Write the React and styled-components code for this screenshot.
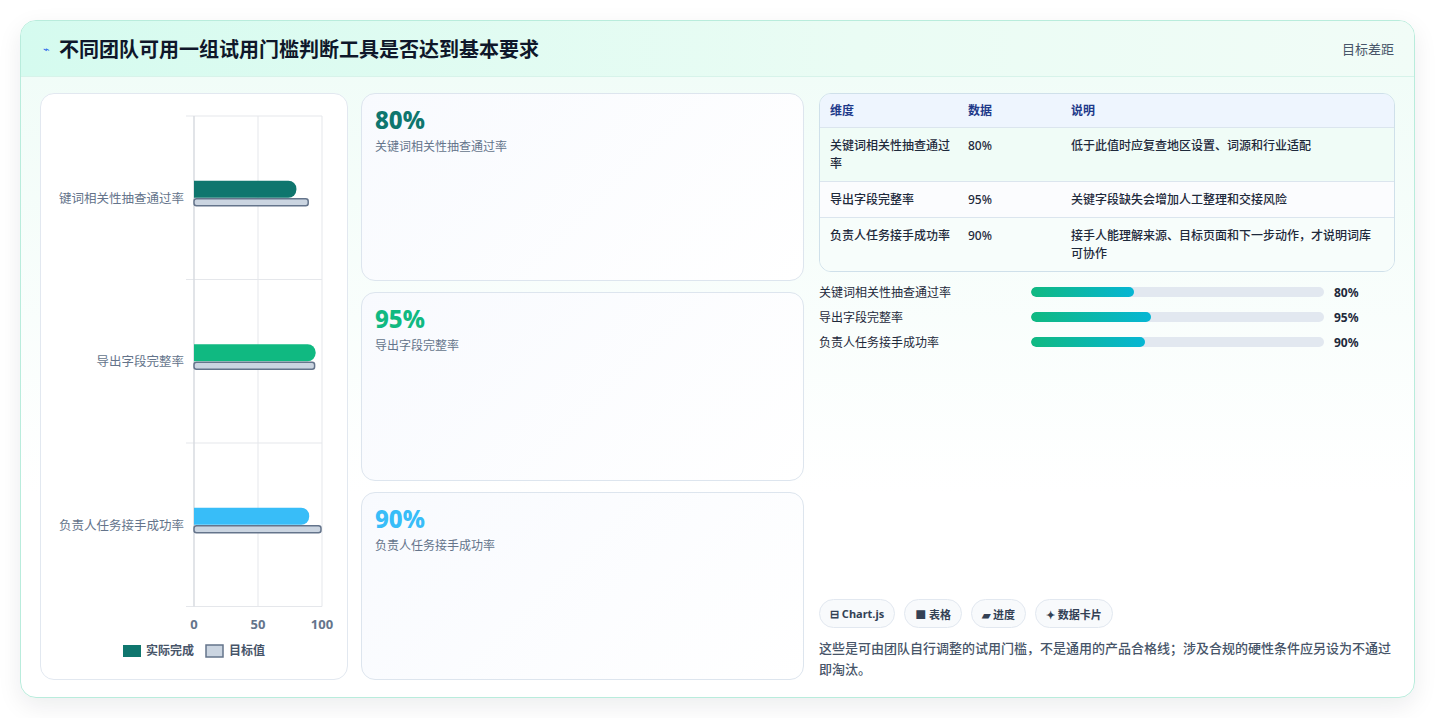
import React from "react";
import styled, { createGlobalStyle } from "styled-components";

const G = createGlobalStyle`
  html,body{margin:0;background:#fff;font-family:"Noto Sans","Noto Sans CJK SC",sans-serif;}
  *{box-sizing:border-box;}
`;
const Page = styled.div`padding:20px 20px 20px 20px;height:718px;`;
const Card = styled.div`
  height:678px;border:1px solid #b9ecdc;border-radius:16px;overflow:hidden;
  background:linear-gradient(180deg,#effcf7 0%,#ffffff 70%);
  box-shadow:0 8px 24px rgba(15,23,42,0.08);display:flex;flex-direction:column;
`;
const Header = styled.div`
  height:56px;flex:none;display:flex;align-items:center;justify-content:space-between;
  padding:0 20px 0 22px;background:linear-gradient(90deg,#d5fbef,#eafcf4 60%,#f1fcf7);
  border-bottom:1px solid #d7f3ea;
`;
const Title = styled.h1`margin:0;font-size:20px;font-weight:700;color:#0f172a;display:flex;align-items:center;gap:9px;`;
const Icon = styled.span`color:#2563eb;font-size:11px;font-weight:400;`;
const Side = styled.span`font-size:13px;color:#475569;`;
const Body = styled.div`flex:1;display:grid;grid-template-columns:308px 443px 1fr;gap:14px 13px;padding:16px 19px 17px 19px;`;
const Panel = styled.div`border:1px solid #e2e8f0;border-radius:14px;background:#fff;`;
const Stats = styled.div`display:grid;grid-template-rows:1fr 1fr 1fr;gap:11px;`;
const Stat = styled.div`border:1px solid #dde5ee;border-radius:14px;background:linear-gradient(135deg,#f8fafe,#fff);padding:10px 13px;`;
const Val = styled.div`font-size:24px;font-weight:800;color:${p=>p.c};line-height:32px;`;
const Lab = styled.div`font-size:12px;color:#64748b;margin-top:1px;`;
const Right = styled.div`display:flex;flex-direction:column;padding-left:2px;`;
const Table = styled.div`border:1px solid #cfe0ea;border-radius:12px;overflow:hidden;font-size:12px;color:#1e293b;`;
const Row = styled.div`display:grid;grid-template-columns:138px 103px 1fr;padding:${p=>p.h?"8px 10px 7px":"9px 10px 8px"};
  background:${p=>p.bg};border-top:${p=>p.h?"none":"1px solid #dbe5ee"};
  color:${p=>p.h?"#1e3a8a":"#1e293b"};font-weight:${p=>p.h?700:500};line-height:18px;
  & > span{padding-right:12px;}`;
const Bars = styled.div`display:flex;flex-direction:column;gap:7px;margin-top:11px;`;
const BarRow = styled.div`display:grid;grid-template-columns:212px 293px 1fr;align-items:center;font-size:12px;color:#1e293b;height:18px;`;
const Track = styled.div`height:10px;border-radius:5px;background:#e2e8f0;overflow:hidden;`;
const Fill = styled.div`height:100%;border-radius:5px;background:linear-gradient(90deg,#10b981,#06b6d4);`;
const Pct = styled.span`font-weight:700;margin-left:10px;`;
const Chips = styled.div`margin-top:auto;display:flex;gap:9px;`;
const Chip = styled.span`height:29px;padding:0 10px;border:1px solid #e2e8f0;border-radius:15px;background:#f8fafc;
  font-size:11px;font-weight:700;color:#334155;display:flex;align-items:center;gap:3px;`;
const Note = styled.p`margin:10px 0 0;font-size:13px;line-height:21px;color:#475569;font-weight:500;`;

const data=[["关键词相关性抽查通过率",80,90,"#0f766e"],["导出字段完整率",95,95,"#10b981"],["负责人任务接手成功率",90,100,"#38bdf8"]];

function Chart(){
  const x0=153,w=128,top=22,cat=163.5;
  return <svg width="306" height="584" style={{display:"block"}}>
    {[0,50,100].map(v=><line key={v} x1={x0+v*w/100} x2={x0+v*w/100} y1={top} y2={top+cat*3} stroke="#e5e7eb"/>)}
    {[0,1,2,3].map(i=><line key={i} x1={x0-8} x2={x0+w} y1={top+i*cat} y2={top+i*cat} stroke="#e5e7eb"/>)}
    <line x1={x0} x2={x0} y1={top} y2={top+cat*3} stroke="#d1d5db"/>
    {data.map(([l,a,t,c],i)=>{const cy=top+cat*i+cat/2;return <g key={i}>
      <text x="143" y={cy+5} textAnchor="end" fontSize="12.5" fill="#64748b" fontFamily="Noto Sans CJK SC">{i===0?"键词相关性抽查通过率":l}</text>
      <path d={`M${x0} ${cy-17}H${x0+a*w/100-8}a8 8 0 0 1 8 8v1a8 8 0 0 1-8 8H${x0}Z`} fill={c}/>
      <rect x={x0} y={cy+1} width={t*w/100-1} height="7" rx="2.5" fill="#cbd5e1" stroke="#64748b" strokeWidth="1.5"/>
    </g>})}
    {[0,50,100].map(v=><text key={v} x={x0+v*w/100} y={top+cat*3+22} textAnchor="middle" fontSize="13" fontWeight="700" fill="#64748b">{v}</text>)}
    <rect x="82" y="551" width="18" height="12" fill="#0f766e"/>
    <text x="105" y="561" fontSize="12" fill="#475569" fontWeight="600" fontFamily="Noto Sans CJK SC">实际完成</text>
    <rect x="165" y="551" width="17" height="12" fill="#cbd5e1" stroke="#64748b" strokeWidth="1.5"/>
    <text x="188" y="561" fontSize="12" fill="#475569" fontWeight="600" fontFamily="Noto Sans CJK SC">目标值</text>
  </svg>;
}

export default function App(){
  return <Page><G/><Card>
    <Header><Title><Icon>⌁</Icon>不同团队可用一组试用门槛判断工具是否达到基本要求</Title><Side>目标差距</Side></Header>
    <Body>
      <Panel><Chart/></Panel>
      <Stats>{data.map(([l,a,,c])=><Stat key={l}><Val c={c}>{a}%</Val><Lab>{l}</Lab></Stat>)}</Stats>
      <Right>
        <Table>
          <Row h bg="#eef5fe"><span>维度</span><span>数据</span><span>说明</span></Row>
          <Row bg="#f0fcf7"><span>关键词相关性抽查通过率</span><span>80%</span><span>低于此值时应复查地区设置、词源和行业适配</span></Row>
          <Row bg="#fbfcfe"><span>导出字段完整率</span><span>95%</span><span>关键字段缺失会增加人工整理和交接风险</span></Row>
          <Row bg="#f7fdfb"><span>负责人任务接手成功率</span><span>90%</span><span>接手人能理解来源、目标页面和下一步动作，才说明词库可协作</span></Row>
        </Table>
        <Bars>{data.map(([l],i)=><BarRow key={l}><span>{l}</span><Track><Fill style={{width:[35,41,39][i]+"%"}}/></Track><Pct>{data[i][1]}%</Pct></BarRow>)}</Bars>
        <Chips><Chip>⊟ Chart.js</Chip><Chip>■ 表格</Chip><Chip>▰ 进度</Chip><Chip>✦ 数据卡片</Chip></Chips>
        <Note>这些是可由团队自行调整的试用门槛，不是通用的产品合格线；涉及合规的硬性条件应另设为不通过即淘汰。</Note>
      </Right>
    </Body>
  </Card></Page>;
}
